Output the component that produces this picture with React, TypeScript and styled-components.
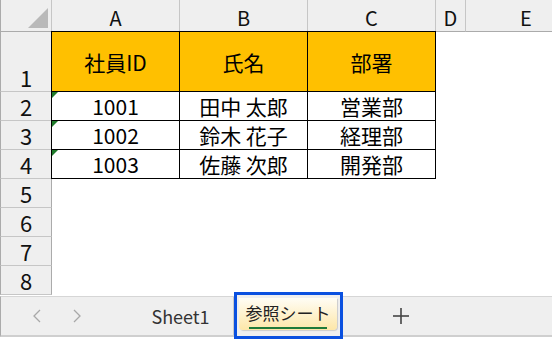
import React from "react";
import styled, { createGlobalStyle } from "styled-components";

const Global = createGlobalStyle`
  html, body { margin: 0; padding: 0; background: #fff; overflow: hidden; }
  body { font-family: "Noto Sans CJK JP", "Noto Sans", sans-serif; }
`;

const Page = styled.div`
  width: 552px;
  height: 340px;
  display: flex;
  flex-direction: column;
  background: #fff;
  overflow: hidden;
`;

const Grid = styled.div`
  display: grid;
  grid-template-columns: 52px 128px 128px 128px 30px 128px;
  grid-template-rows: 32px 60px repeat(7, 29px);
  width: 552px;
  overflow: hidden;
`;

const Corner = styled.div`
  position: relative;
  background: #efefef;
  border-right: 1px solid #c6c6c6;
  border-bottom: 1px solid #ababab;
  border-left: 1px solid #ababab;
  box-sizing: border-box;
  &::after {
    content: "";
    position: absolute;
    right: 3px;
    bottom: 3px;
    width: 0;
    height: 0;
    border-left: 20px solid transparent;
    border-bottom: 20px solid #b9b9b9;
  }
`;

const ColHead = styled.div<{ $align?: string; $indent?: number }>`
  background: #efefef;
  border-right: 1px solid #c6c6c6;
  border-bottom: 1px solid #ababab;
  box-sizing: border-box;
  display: flex;
  align-items: center;
  justify-content: ${(p) => p.$align || "center"};
  padding-left: ${(p) => p.$indent || 0}px;
  padding-top: 3px;
  font-size: 20px;
  color: #111;
`;

const RowHead = styled.div<{ $bottom?: boolean }>`
  background: #efefef;
  border-right: 1px solid #ababab;
  border-bottom: 1px solid #c6c6c6;
  border-left: 1px solid #ababab;
  box-sizing: border-box;
  display: flex;
  justify-content: center;
  align-items: ${(p) => (p.$bottom ? "flex-end" : "center")};
  padding-bottom: ${(p) => (p.$bottom ? "3px" : "0")};
  font-size: 22px;
  color: #111;
  line-height: 1;
`;

const Cell = styled.div<{ $head?: boolean; $mark?: boolean }>`
  position: relative;
  background: ${(p) => (p.$head ? "#ffc000" : "#fff")};
  border: 1px solid #000;
  margin-left: -1px;
  margin-top: -1px;
  box-sizing: border-box;
  width: calc(100% + 1px);
  height: calc(100% + 1px);
  display: flex;
  align-items: center;
  justify-content: center;
  font-size: 21px;
  color: #000;
  ${(p) =>
    p.$mark
      ? `&::before {
    content: "";
    position: absolute;
    left: 0;
    top: 0;
    border-top: 6px solid #1e7a2a;
    border-right: 6px solid transparent;
  }`
      : ""}
`;

const Blank = styled.div`
  background: #fff;
`;

const TabBar = styled.div`
  position: relative;
  height: 41px;
  box-sizing: border-box;
  margin-top: 1px;
  background: #efefef;
  border-top: 1px solid #d6d6d6;
  border-bottom: 2px solid #cfcfcf;
  border-left: 1px solid #ababab;
  display: flex;
  align-items: center;
`;

const Nav = styled.div`
  width: 40px;
  display: flex;
  justify-content: center;
`;

const NavGroup = styled.div`
  display: flex;
  padding-left: 16px;
  width: 111px;
`;

const Tab = styled.div`
  width: 106px;
  height: 100%;
  display: flex;
  align-items: center;
  justify-content: center;
  font-size: 18px;
  color: #333;
  border-right: 1px solid #c8c8c8;
  box-sizing: border-box;
`;

const ActiveFrame = styled.div`
  position: relative;
  margin-top: -8px;
  margin-bottom: -6px;
  width: 109px;
  height: 47px;
  box-sizing: border-box;
  border: 3px solid #0a50e0;
  background: #efefef;
  padding: 3px 3px 6px 2px;
  display: flex;
`;

const ActiveTab = styled.div`
  flex: 1;
  border-radius: 0 0 4px 4px;
  background: linear-gradient(#fffdf5, #fde7a8);
  box-shadow: 1px 1px 1px rgba(0, 0, 0, 0.15);
  display: flex;
  flex-direction: column;
  align-items: center;
  justify-content: center;
  font-size: 17px;
  color: #222;
  padding-top: 1px;
`;

const Underline = styled.div`
  width: 78px;
  height: 2px;
  background: #1e7a3a;
  margin-top: 2px;
`;

const Plus = styled.div`
  margin-left: 49px;
  display: flex;
`;

const Chevron = ({ dir }: { dir: "l" | "r" }) => (
  <svg width="10" height="16" viewBox="0 0 10 16">
    <polyline
      points={dir === "l" ? "8,2 2,8 8,14" : "2,2 8,8 2,14"}
      fill="none"
      stroke="#a8a8a8"
      strokeWidth="1.3"
    />
  </svg>
);

const PlusIcon = () => (
  <svg width="18" height="18" viewBox="0 0 18 18">
    <line x1="9" y1="1" x2="9" y2="17" stroke="#444" strokeWidth="1.6" />
    <line x1="1" y1="9" x2="17" y2="9" stroke="#444" strokeWidth="1.6" />
  </svg>
);

const data = [
  ["1001", "田中 太郎", "営業部"],
  ["1002", "鈴木 花子", "経理部"],
  ["1003", "佐藤 次郎", "開発部"],
];

export default function App() {
  return (
    <Page>
      <Global />
      <Grid>
        <Corner />
        <ColHead>A</ColHead>
        <ColHead>B</ColHead>
        <ColHead>C</ColHead>
        <ColHead>D</ColHead>
        <ColHead $align="flex-start" $indent={54}>E</ColHead>

        <RowHead $bottom>1</RowHead>
        <Cell $head>社員ID</Cell>
        <Cell $head>氏名</Cell>
        <Cell $head>部署</Cell>
        <Blank />
        <Blank />

        {data.map((r, i) => (
          <React.Fragment key={i}>
            <RowHead>{i + 2}</RowHead>
            <Cell $mark>{r[0]}</Cell>
            <Cell>{r[1]}</Cell>
            <Cell>{r[2]}</Cell>
            <Blank />
            <Blank />
          </React.Fragment>
        ))}

        {[5, 6, 7, 8].map((n) => (
          <React.Fragment key={n}>
            <RowHead>{n}</RowHead>
            <Blank />
            <Blank />
            <Blank />
            <Blank />
            <Blank />
          </React.Fragment>
        ))}
      </Grid>
      <TabBar>
        <NavGroup>
          <Nav>
            <Chevron dir="l" />
          </Nav>
          <Nav>
            <Chevron dir="r" />
          </Nav>
        </NavGroup>
        <Tab>Sheet1</Tab>
        <ActiveFrame>
          <ActiveTab>
            参照シート
            <Underline />
          </ActiveTab>
        </ActiveFrame>
        <Plus>
          <PlusIcon />
        </Plus>
      </TabBar>
    </Page>
  );
}
